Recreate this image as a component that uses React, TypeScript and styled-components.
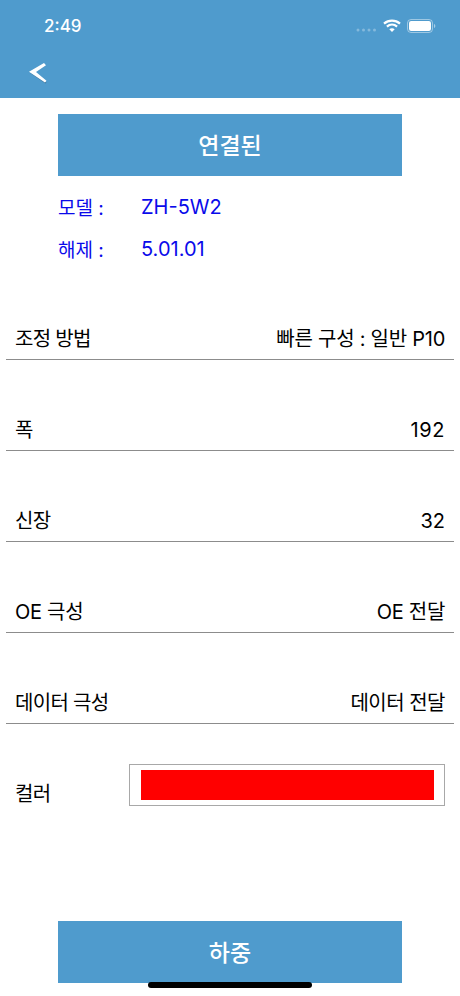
import React from "react";
import styled, { createGlobalStyle } from "styled-components";

const Global = createGlobalStyle`
  html, body { margin: 0; padding: 0; background: #fff; }
  body { font-family: Inter, "Noto Sans CJK KR", sans-serif; }
  * { box-sizing: border-box; }
`;

const Screen = styled.div`
  width: 460px;
  height: 996px;
  position: relative;
  overflow: hidden;
  background: #fff;
  display: flex;
  flex-direction: column;
`;

const Header = styled.header`
  height: 98px;
  flex: none;
  background: #4f9bcd;
  display: flex;
  flex-direction: column;
`;

const StatusBar = styled.div`
  height: 48px;
  padding: 4px 24px 0 44px;
  display: flex;
  align-items: center;
  justify-content: space-between;
  color: #fff;
`;

const Clock = styled.span`
  font-size: 17px;
  font-weight: 500;
`;

const StatusIcons = styled.div`
  display: flex;
  align-items: center;
  gap: 6px;
`;

const NavBar = styled.div`
  height: 50px;
  padding: 0 0 0 28px;
  display: flex;
  align-items: center;
`;

const ActionBar = styled.div<{ $top: number }>`
  width: 344px;
  height: 62px;
  margin: ${(p) => p.$top}px auto 0;
  padding-bottom: 3px;
  flex: none;
  background: #4f9bcd;
  color: #fff;
  font-size: 23px;
  font-weight: 500;
  display: flex;
  align-items: center;
  justify-content: center;
`;

const Info = styled.div`
  padding: 9px 0 0 58px;
  display: flex;
  flex-direction: column;
  height: 93px;
  flex: none;
`;

const InfoRow = styled.div`
  height: 42px;
  padding-top: 1px;
  display: flex;
  align-items: center;
  color: #0a0aea;
  font-size: 20px;
`;

const InfoLabel = styled.span`
  width: 83px;
  font-size: 19px;
`;

const Rows = styled.div`
  display: flex;
  flex-direction: column;
  padding: 0 6px;
`;

const Row = styled.div`
  height: 91px;
  padding: 0 9px 7px;
  border-bottom: 1px solid #8c8c8c;
  display: flex;
  align-items: flex-end;
  justify-content: space-between;
  color: #000;
  font-size: 20px;
  line-height: 26px;
`;

const Cell = styled.span<{ $track: number }>`
  letter-spacing: ${(p) => p.$track}px;
`;

const ColorRow = styled.div`
  height: 82px;
  padding: 0 9px;
  display: flex;
  align-items: flex-end;
  justify-content: space-between;
  font-size: 20px;
  line-height: 24px;
  letter-spacing: -0.7px;
`;

const Swatch = styled.div`
  width: 316px;
  height: 42px;
  border: 1px solid #a8a8a8;
  padding: 5px 10px 5px 11px;
`;

const SwatchFill = styled.div`
  height: 100%;
  background: #ff0000;
`;

const HomeIndicator = styled.div`
  position: absolute;
  left: 148px;
  bottom: 8px;
  width: 164px;
  height: 6px;
  border-radius: 3px;
  background: #000;
`;

const rows: { label: string; value: string; labelTrack: number; valueTrack: number }[] = [
  { label: "조정 방법", value: "빠른 구성 : 일반 P10", labelTrack: -0.7, valueTrack: -0.25 },
  { label: "폭", value: "192", labelTrack: 0, valueTrack: 0.6 },
  { label: "신장", value: "32", labelTrack: -0.7, valueTrack: 0 },
  { label: "OE 극성", value: "OE 전달", labelTrack: -0.3, valueTrack: -0.3 },
  { label: "데이터 극성", value: "데이터 전달", labelTrack: -0.7, valueTrack: -0.5 },
];

export default function App() {
  return (
    <Screen>
      <Global />
      <Header>
        <StatusBar>
          <Clock>2:49</Clock>
          <StatusIcons>
            <svg width="21" height="12" viewBox="0 0 21 12">
              <g fill="#fff" opacity="0.3">
                <circle cx="2" cy="10" r="1.5" />
                <circle cx="7.500" cy="10" r="1.5" />
                <circle cx="13" cy="10" r="1.5" />
                <circle cx="18.500" cy="10" r="1.5" />
              </g>
            </svg>
            <svg width="18" height="14" viewBox="0 0 18 14">
              <path d="M1 4.600C5.600.6 12.400.6 17 4.600" stroke="#fff" strokeWidth="2.2" fill="none" />
              <path d="M3.900 7.600c3-2.600 7.200-2.600 10.200 0" stroke="#fff" strokeWidth="2.2" fill="none" />
              <path d="M6.300 10.200 9 13l2.700-2.800c-1.600-1.300-3.800-1.300-5.400 0z" fill="#fff" />
            </svg>
            <svg width="29" height="14" viewBox="0 0 29 14">
              <rect x="0.500" y="0.500" width="25" height="13" rx="3.500" fill="none" stroke="#fff" strokeOpacity="0.45" />
              <rect x="2" y="2" width="22" height="10" rx="2.200" fill="#fff" />
              <path d="M27 5v4c.8-.3 1.300-1.100 1.300-2S27.800 5.300 27 5z" fill="#fff" fillOpacity="0.5" />
            </svg>
          </StatusIcons>
        </StatusBar>
        <NavBar>
          <svg width="20" height="22" viewBox="0 0 20 22">
            <path d="M3 11 18.500 20.500 17.500 21.500 1.500 10.500z" fill="#34566f" opacity="0.5" />
            <path d="M1 9.800 16 1 18 3.200 8 10 18.500 18.800 17 20.600z" fill="#fff" />
          </svg>
        </NavBar>
      </Header>
      <ActionBar $top={16}>연결된</ActionBar>
      <Info>
        <InfoRow>
          <InfoLabel>모델 :</InfoLabel>
          <span>ZH-5W2</span>
        </InfoRow>
        <InfoRow>
          <InfoLabel>해제 :</InfoLabel>
          <span>5.01.01</span>
        </InfoRow>
      </Info>
      <Rows>
        {rows.map((r) => (
          <Row key={r.label}>
            <Cell $track={r.labelTrack}>{r.label}</Cell>
            <Cell $track={r.valueTrack}>{r.value}</Cell>
          </Row>
        ))}
        <ColorRow>
          <span>컬러</span>
          <Swatch>
            <SwatchFill />
          </Swatch>
        </ColorRow>
      </Rows>
      <ActionBar $top={115}>하중</ActionBar>
      <HomeIndicator />
    </Screen>
  );
}
